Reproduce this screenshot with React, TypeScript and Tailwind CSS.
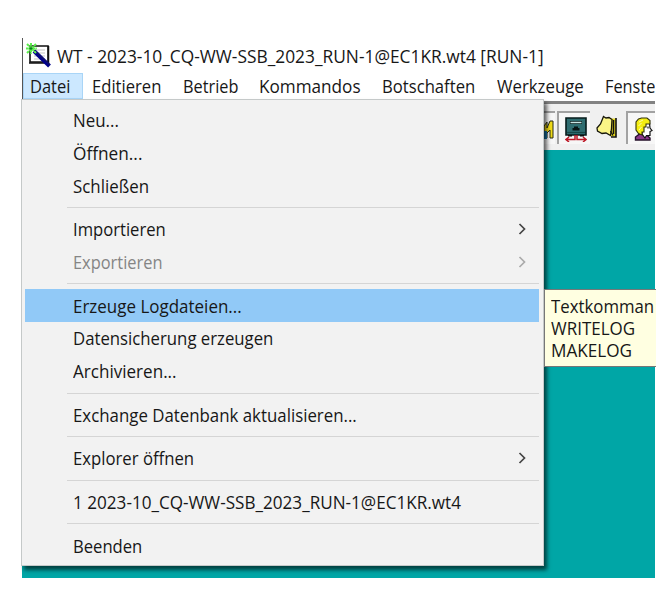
import clsx from "clsx";

interface MenuEntry {
  label: string;
  scale: string;
  submenu?: boolean;
  disabled?: boolean;
  active?: boolean;
}

const menuBar = [
  { label: "Datei", width: "w-[60px]", scale: "scale-x-[0.942]", active: true },
  { label: "Editieren", width: "w-[91px]", scale: "scale-x-[0.95]" },
  { label: "Betrieb", width: "w-[76px]", scale: "scale-x-[0.932]" },
  { label: "Kommandos", width: "w-[123px]", scale: "scale-x-[0.98]" },
  { label: "Botschaften", width: "w-[115px]", scale: "scale-x-[0.952]" },
  { label: "Werkzeuge", width: "w-[108px]", scale: "scale-x-[0.959]" },
  { label: "Fenste", width: "w-[80px]", scale: "scale-x-[0.932]" },
];

const menuGroups: MenuEntry[][] = [
  [
    { label: "Neu...", scale: "scale-x-[0.965]" },
    { label: "Öffnen...", scale: "scale-x-[0.985]" },
    { label: "Schließen", scale: "scale-x-[0.965]" },
  ],
  [
    { label: "Importieren", scale: "scale-x-[0.95]", submenu: true },
    { label: "Exportieren", scale: "scale-x-[0.937]", submenu: true, disabled: true },
  ],
  [
    { label: "Erzeuge Logdateien...", scale: "scale-x-[0.97]", active: true },
    { label: "Datensicherung erzeugen", scale: "scale-x-[0.957]" },
    { label: "Archivieren...", scale: "scale-x-[0.975]" },
  ],
  [{ label: "Exchange Datenbank aktualisieren...", scale: "scale-x-[0.962]" }],
  [{ label: "Explorer öffnen", scale: "scale-x-[0.955]", submenu: true }],
  [{ label: "1 2023-10_CQ-WW-SSB_2023_RUN-1@EC1KR.wt4", scale: "scale-x-[0.978]" }],
  [{ label: "Beenden", scale: "scale-x-[0.95]" }],
];

function AppIcon() {
  return (
    <svg width="25" height="25" viewBox="0 0 25 25">
      <path d="M4 3h18v16H4z" fill="#fff" stroke="#111" strokeWidth="1.6" />
      <path d="M22.5 3v17H3" fill="none" stroke="#111" strokeWidth="1.5" />
      <path d="M8 7h11M8 10h11M8 13h11M8 16h11" stroke="#c4c4c4" strokeWidth="1.2" />
      <path d="M8 8l15.5 15" stroke="#00008b" strokeWidth="4" />
      <path d="M8 7l16 15" stroke="#1a1a50" strokeWidth="1" />
      <path d="M5 0v11M0 5.5h11M1 1l9 9M10 1l-9 9" stroke="#5cf04c" strokeWidth="2" strokeDasharray="2.8 0.6" />
      <path d="M5 4v3M3.5 5.5h3" stroke="#087c20" strokeWidth="1.2" />
    </svg>
  );
}

function RadioIcon() {
  return (
    <svg width="22" height="25" viewBox="0 0 22 25">
      <path d="M1 1h20v17H1z" fill="#2f6d70" stroke="#071c1c" strokeWidth="1.6" />
      <path d="M5 5.5h12" stroke="#071c1c" strokeWidth="3" />
      <path d="M5.500 5.500h11" stroke="#c8e4e2" strokeWidth="1.5" />
      <path d="M7.500 13.500v-2.500h1.500V9.500h4V11h1.500v2.500z" fill="#071414" />
      <path d="M2 15.500h18" stroke="#174848" strokeWidth="1.2" />
      <path d="M3 18h4v1.500H3zM15 18h4v1.500h-4z" fill="#111" />
      <path d="M10 18v4.500H1M12 18v4.500h9M4 20l-3 2.500L4 25M18 20l3 2.500-3 2.500" fill="none" stroke="#bd1726" strokeWidth="1.5" />
    </svg>
  );
}

function NoteIcon() {
  return (
    <svg width="22" height="24" viewBox="0 0 22 24">
      <path d="M15 3.500h5v18h-5z" fill="#e3d61d" />
      <path d="M20 3v19h-5M17.500 5v14" fill="none" stroke="#111" strokeWidth="1.6" />
      <path d="M7.500 1.500L10 3l3-.5 3 2-.5 9-1 7-4.500-2.500-4 .5-4.500-2.500L1 13l3.500-4z" fill="#fbf586" stroke="#16160a" strokeWidth="1.3" />
      <path d="M14.500 16l2.500 4.500" stroke="#111" strokeWidth="1.3" />
    </svg>
  );
}

function OperatorIcon() {
  return (
    <svg width="20" height="24" viewBox="0 0 20 24">
      <path d="M1.500 23v-3l4-3h6l4.500 4v2z" fill="#8b3789" stroke="#24102a" strokeWidth="1.4" />
      <path d="M9 6h6.500l.5 5 2 2.500-2 1v4h-3.500L11 21l-3-4z" fill="#fff" stroke="#111" strokeWidth="1.2" />
      <path d="M4.500 2l3-1h5.500l3 2.500V7h-4v3h-2v5H8v3L4.500 16.500 2 13V5z" fill="#f4ee13" stroke="#34340a" strokeWidth="1.1" />
      <path d="M5 5l4-2M4.500 9l3-3M5 13l2.500-3" stroke="#fffcaa" />
      <path d="M14 9.500v2" stroke="#111" strokeWidth="1.2" />
    </svg>
  );
}

function Toolbar() {
  const frame = "h-[33px] border-l-2 border-t-2 border-[#a2a2a2] bg-[#f7f7f7]";
  return (
    <div className="flex h-[49px] items-start border-t-[3px] border-[#828282] bg-[#f0f0f0] pt-[7px] pl-[507px]">
      <div className={clsx(frame, "w-[26px] shrink-0")}>
        <svg width="24" height="30" viewBox="0 0 24 30">
          <path d="M13 13l3-4v6l3-7h3v17h-3v-8l-3 3v5h-3z" fill="#f2dd19" stroke="#292c14" strokeWidth="1" />
          <path d="M11 18h5v8h-5z" fill="#1673a4" />
        </svg>
      </div>
      <div className={clsx(frame, "ml-[2px] w-[33px] shrink-0 pt-[4px] pl-[6px]")}>
        <RadioIcon />
      </div>
      <div className="ml-[6px] w-[30px] shrink-0 pt-[4px]">
        <NoteIcon />
      </div>
      <div className={clsx(frame, "w-[36px] shrink-0 pt-[4px] pl-[6px]")}>
        <OperatorIcon />
      </div>
    </div>
  );
}

function MenuItem({ label, scale, submenu, disabled, active }: MenuEntry) {
  return (
    <div
      className={clsx(
        "mr-[4px] ml-[3px] flex h-[32.8px] items-center justify-between pr-[13px] pl-[48px]",
        active && "bg-[#91c9f7]",
        disabled ? "text-[#858585]" : "text-[#171717]",
      )}
    >
      <span className={clsx("origin-left", scale)}>{label}</span>
      {submenu && (
        <svg width="8" height="12" viewBox="0 0 8 12" fill="none" stroke={disabled ? "#aaa" : "#444"} strokeWidth="1.7">
          <path d="M1.5 1l5 5-5 5" />
        </svg>
      )}
    </div>
  );
}

function FileMenu() {
  return (
    <div className="absolute top-[61px] -left-px h-[467px] w-[523px] border border-[#c5c9c9] bg-[#f2f2f2] pt-[3.7px] shadow-[3px_4px_4px_rgba(0,0,0,0.6)]">
      {menuGroups.map((group, index) => (
        <div key={index}>
          {index > 0 && (
            <div className="mr-[4px] ml-[45px] flex h-[10.8px] items-center">
              <div className="h-px w-full bg-[#d5d5d5]" />
            </div>
          )}
          {group.map((entry) => (
            <MenuItem key={entry.label} {...entry} />
          ))}
        </div>
      ))}
    </div>
  );
}

export default function App() {
  return (
    <div className="h-[597px] w-[671px] overflow-hidden bg-white pt-[38px] pl-[22px] font-['Open_Sans',sans-serif] text-[17.5px] leading-[22px] whitespace-nowrap text-[#171717]">
      <div className="relative h-[540px] w-[633px] overflow-clip [overflow-clip-margin:1px]">
        <div className="flex h-full flex-col overflow-hidden bg-[#00a6a6]">
          <div className="h-[63px] shrink-0 border-l border-[#555] bg-white">
            <div className="flex h-[35px] items-center pl-[3px]">
              <AppIcon />
              <span className="ml-[6px] origin-left scale-x-[0.991]">
                WT - 2023-10_CQ-WW-SSB_2023_RUN-1@EC1KR.wt4 [RUN-1]
              </span>
            </div>
            <div className="flex h-[26px]">
              {menuBar.map(({ label, width, scale, active }) => (
                <div
                  key={label}
                  className={clsx("flex shrink-0 items-center pb-px", width, active ? "border border-[#a9d5f7] bg-[#cce8ff] pl-[6px]" : "pl-[9px]")}
                >
                  <span className={clsx("origin-left", scale)}>{label}</span>
                </div>
              ))}
            </div>
          </div>
          <Toolbar />
        </div>
        <FileMenu />
        <div className="absolute top-[251px] left-[522px] h-[78px] w-[140px] border border-[#777] bg-[#ffffe1] pt-[5px] pl-[6px]">
          <p className="origin-left scale-x-[0.96]">Textkomman</p>
          <p className="origin-left scale-x-[0.97]">WRITELOG</p>
          <p className="origin-left scale-x-[0.98]">MAKELOG</p>
        </div>
      </div>
    </div>
  );
}
